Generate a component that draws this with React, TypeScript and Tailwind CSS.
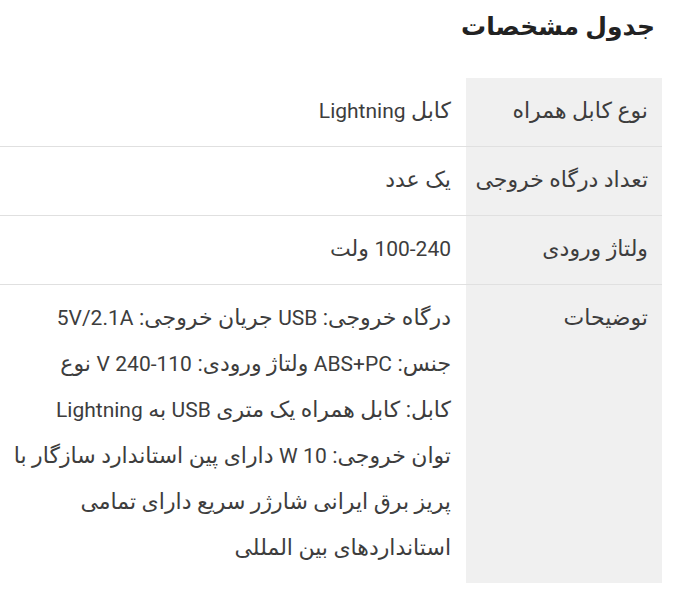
import React from 'react';

const ROWS: { label: string; lines: string[] }[] = [
  { label: 'نوع کابل همراه', lines: ['کابل Lightning'] },
  { label: 'تعداد درگاه خروجی', lines: ['یک عدد'] },
  { label: 'ولتاژ ورودی', lines: ['100-240 ولت'] },
  {
    label: 'توضیحات',
    lines: [
      'درگاه خروجی: USB جریان خروجی: 5V/2.1A',
      'جنس: ABS+PC ولتاژ ورودی: 110-240 V نوع',
      'کابل: کابل همراه یک متری USB به Lightning',
      'توان خروجی: 10 W دارای پین استاندارد سازگار با',
      'پریز برق ایرانی شارژر سریع دارای تمامی',
      'استانداردهای بین المللی',
    ],
  },
];

// Latin words and numbers are set in Roboto at their own size
function Mixed({ text }: { text: string }) {
  const parts = text.split(/([A-Za-z0-9.\/+\-]+)/);
  return (
    <>
      {parts.map((p, i) =>
        i % 2 === 1 ? (
          <span key={i} className="text-[21px]">{p}</span>
        ) : (
          <React.Fragment key={i}>{p}</React.Fragment>
        )
      )}
    </>
  );
}

export default function App() {
  return (
    <div
      dir="rtl"
      className="w-[692px] h-[609px] overflow-hidden bg-white text-[#3d3d3d] font-['Roboto','DejaVu_Sans',sans-serif]"
    >
      <div className="pr-[37px] pt-[8px] h-[78px]">
        <h2 className="text-[25px] leading-[38px] font-bold text-[#222]">جدول مشخصات</h2>
      </div>
      <div className="w-[662px] mr-[30px]">
        {ROWS.map((row, i) => {
          const last = i === ROWS.length - 1;
          return (
            <div key={i} className={`flex ${last ? '' : 'border-b border-[#e0e0e0]'}`}>
              <div className="w-[196px] shrink-0 bg-[#f0f0f0] pr-[14px] pt-[10px] pb-[12px] text-[22px] leading-[46px] whitespace-nowrap">
                {row.label}
              </div>
              <div className="flex-1 pr-[15px] pt-[10px] pb-[12px] text-[22px] leading-[46px]">
                {row.lines.map((l, j) => (
                  <div key={j} className="whitespace-nowrap">
                    <Mixed text={l} />
                  </div>
                ))}
              </div>
            </div>
          );
        })}
      </div>
    </div>
  );
}
